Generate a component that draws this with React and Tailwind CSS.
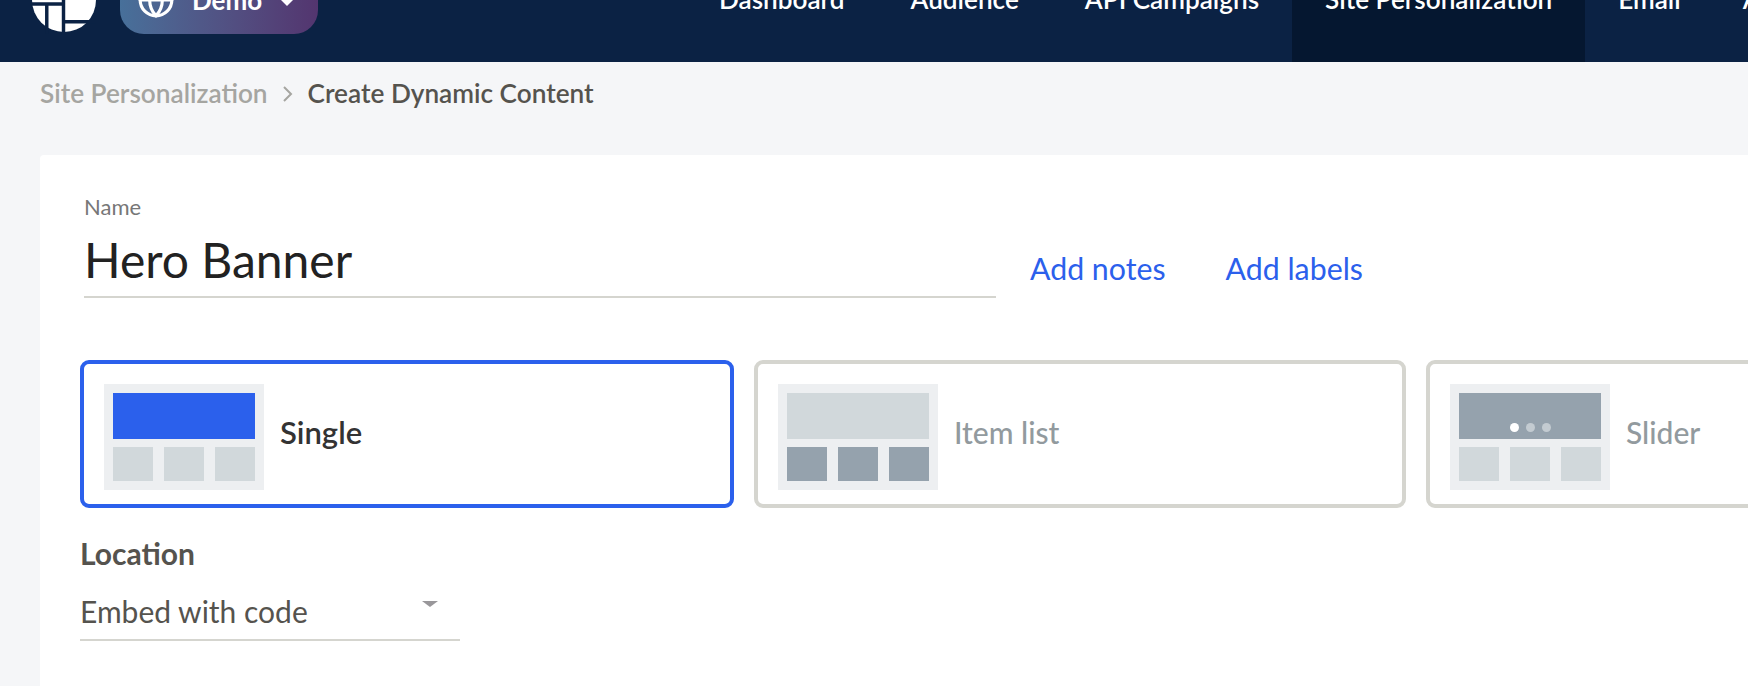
import { Globe } from 'lucide-react';

const NAV = ['Dashboard', 'Audience', 'API Campaigns', 'Site Personalization', 'Email'];

function Logo() {
  return (
    <svg width="64" height="70" viewBox="0 0 65 70" className="shrink-0">
      <circle cx="32.5" cy="35" r="32.5" fill="#fff" />
      <path d="M0 39h32M15 39v30M32 0v70M32 57h33" stroke="#0b2244" strokeWidth="3.5" fill="none" />
    </svg>
  );
}

// the three small layout pictures in the type cards
function Thumb({ top, bottom, dots }) {
  return (
    <div className="mt-[6px] w-[160px] h-[106px] bg-[#edeff1] pt-[9px] px-[9px] flex flex-col gap-[8px] shrink-0">
      <div className={`h-[46px] w-[142px] ${top} flex items-end justify-center gap-[7px] pb-[7px]`}>
        {dots && (
          <>
            <span className="w-[9px] h-[9px] rounded-full bg-white" />
            <span className="w-[9px] h-[9px] rounded-full bg-[#c3cbd1]" />
            <span className="w-[9px] h-[9px] rounded-full bg-[#c3cbd1]" />
          </>
        )}
      </div>
      <div className="flex justify-between w-[142px]">
        <div className={`w-[40px] h-[34px] ${bottom}`} />
        <div className={`w-[40px] h-[34px] ${bottom}`} />
        <div className={`w-[40px] h-[34px] ${bottom}`} />
      </div>
    </div>
  );
}

function TypeCard({ label, active, width, top, bottom, dots }) {
  return (
    <div
      className={`${width} h-[148px] shrink-0 rounded-[9px] border-[4px] pl-[20px] flex items-center gap-[16px] ${
        active ? 'border-[#2b60ec]' : 'border-[#d5d5cf]'
      }`}
    >
      <Thumb top={top} bottom={bottom} dots={dots} />
      <span className={`-mt-[3px] ${active ? 'text-[31px] font-semibold text-[#333333]' : 'text-[30px] font-medium text-[#929a9e]'}`}>
        {label}
      </span>
    </div>
  );
}

export default function App() {
  return (
    <div className="w-[1748px] h-[686px] overflow-hidden bg-[#f5f6f8] font-['Lato',sans-serif]">
      {/* top bar, cut off by the top of the window */}
      <header className="h-[62px] bg-[#0b2244] overflow-hidden">
        <div className="h-[124px] -mt-[62px] flex items-stretch">
          <div className="flex items-center pl-[32px]">
            <Logo />
            <div className="ml-[24px] w-[198px] h-[68px] rounded-[24px] bg-gradient-to-r from-[#47709a] to-[#53356f] flex items-center pl-[17px] text-white">
              <Globe size={38} strokeWidth={2} />
              <span className="ml-[17px] text-[26px] font-bold">Demo</span>
              <span className="ml-[18px] mt-[4px] w-0 h-0 border-x-[7px] border-x-transparent border-t-[7px] border-t-white" />
            </div>
          </div>
          <nav className="ml-[368px] flex items-stretch text-white text-[26.15px] font-semibold">
            {NAV.map(n => (
              <div
                key={n}
                className={`px-[33px] flex items-center whitespace-nowrap ${n === 'Site Personalization' ? 'bg-[#051730]' : ''}`}
              >
                {n}
              </div>
            ))}
            <div className="ml-[29px] flex items-center whitespace-nowrap">Apps</div>
          </nav>
        </div>
      </header>

      {/* breadcrumb */}
      <div className="h-[93px] pl-[40px] pt-[13px] flex items-start text-[26.2px] font-semibold leading-[36px]">
        <span className="text-[#a5a5a1]">Site Personalization</span>
        <svg width="14" height="18" viewBox="0 0 14 18" className="mx-[13px] mt-[10px]">
          <path d="M3 2l7 7-7 7" stroke="#a5a5a1" strokeWidth="2" fill="none" />
        </svg>
        <span className="text-[#55534e]">Create Dynamic Content</span>
      </div>

      <main className="ml-[40px] h-[600px] bg-white rounded-tl-[4px] pl-[40px]">
        <div className="pt-[38px] flex items-end">
          <div className="ml-[4px] w-[912px] border-b-2 border-[#d5d5cf] pb-[7px]">
            <div className="text-[22px] leading-[28px] text-[#777777]">Name</div>
            <div className="text-[48px] leading-[58px] text-[#222222] mt-[10px]">Hero Banner</div>
          </div>
          <div className="ml-[34px] mb-[12px] flex gap-[60px] text-[30.3px] leading-[36px] text-[#2b60ec]">
            <span>Add notes</span>
            <span>Add labels</span>
          </div>
        </div>

        <div className="mt-[62px] flex gap-[20px]">
          <TypeCard label="Single" active width="w-[654px]" top="bg-[#2b60ec]" bottom="bg-[#d1d8db]" />
          <TypeCard label="Item list" width="w-[652px]" top="bg-[#d1d8db]" bottom="bg-[#95a2ad]" />
          <TypeCard label="Slider" width="w-[652px]" top="bg-[#95a2ad]" bottom="bg-[#d1d8db]" dots />
        </div>

        <div className="mt-[27px] text-[30px] leading-[36px] font-bold text-[#55534e]">Location</div>
        <div className="mt-[22px] w-[380px] h-[48px] border-b-2 border-[#d5d5cf] flex items-start justify-between text-[30px] leading-[36px] text-[#55534e]">
          <span>Embed with code</span>
          <span className="mt-[8px] mr-[22px] w-0 h-0 border-x-[8px] border-x-transparent border-t-[6px] border-t-[#99979a]" />
        </div>
      </main>
    </div>
  );
}
